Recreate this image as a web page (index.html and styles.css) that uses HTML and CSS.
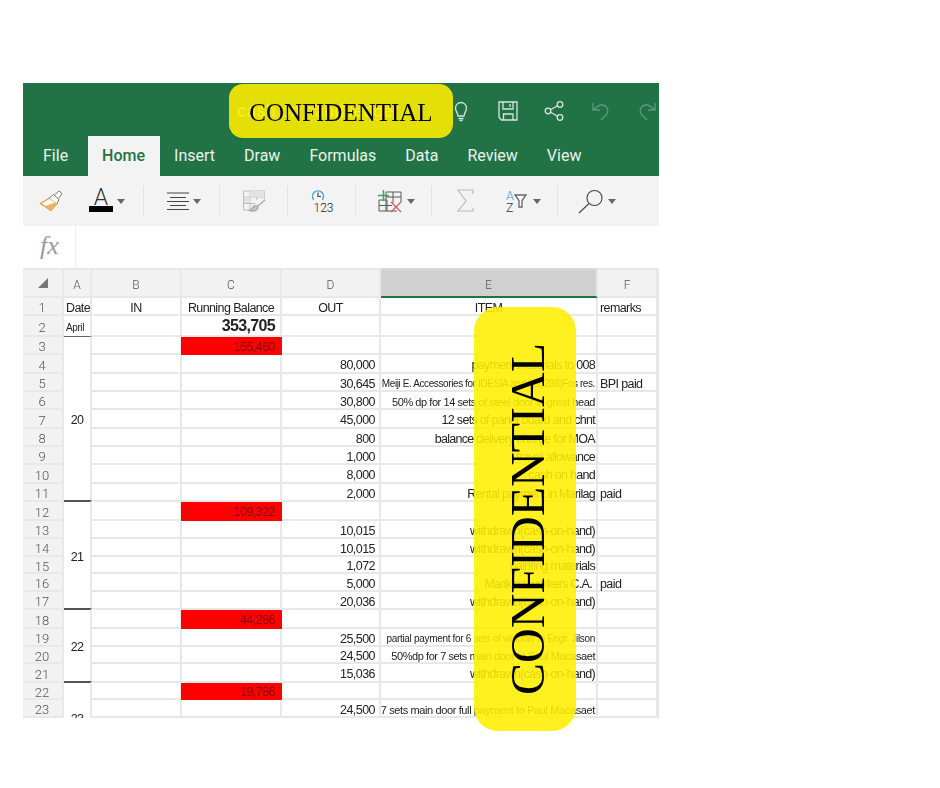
FILE: index.html
```html
<!DOCTYPE html>
<html lang="en">
<head>
<meta charset="utf-8">
<title>Cash on hand</title>
<link rel="stylesheet" href="styles.css">
</head>
<body>
<main class="app">
  <header class="ribbon">
    <div class="topbar">
      <div class="doc-title">cash on hand ledger</div>
      <div class="top-icons">
        <svg class="ti" viewBox="0 0 24 24"><path d="M9 17c0-3-2.500-4.500-2.500-8a5.500 5.500 0 0 1 11 0c0 3.500-2.500 5-2.500 8z"/><path d="M9.500 19.500h5M10.500 21.500h3"/></svg>
        <svg class="ti" viewBox="0 0 24 24"><path d="M3 3h18v18H5.500L3 18.500z"/><path d="M7 3v7h10V3M14 5v3M7.500 21v-6h9.500v6"/></svg>
        <svg class="ti" viewBox="0 0 24 24"><circle cx="6" cy="12" r="2.800"/><circle cx="18" cy="5.500" r="2.800"/><circle cx="18" cy="18.500" r="2.800"/><path d="M8.500 10.700l7-4M8.500 13.300l7 4"/></svg>
        <svg class="ti dim" viewBox="0 0 24 24"><path d="M4 4v7h7"/><path d="M4 11c3-3 5-5 9-5 5 0 7 5 5 9l-6 6"/></svg>
        <svg class="ti dim" viewBox="0 0 24 24"><path d="M20 4v7h-7"/><path d="M20 11c-3-3-5-5-9-5-5 0-7 5-5 9l6 6"/></svg>
      </div>
    </div>
    <nav class="tabs">
      <span class="tab">File</span>
      <span class="tab active">Home</span>
      <span class="tab">Insert</span>
      <span class="tab">Draw</span>
      <span class="tab">Formulas</span>
      <span class="tab">Data</span>
      <span class="tab">Review</span>
      <span class="tab">View</span>
    </nav>
  </header>

  <div class="toolbar">
    <div class="group g1">
      <svg class="ic brush" viewBox="0 0 24 24">
        <path class="o" d="M1.500 14.500L10.500 9l7.500 5.500-6 7z"/>
        <path class="of" d="M6 17l9-3 3 .5-6 7z"/>
        <path class="g" d="M10.500 9l4-3.500 5.500 5-2 4M15.500 6l4.500-4 3 2.500-3.500 5"/>
      </svg>
      <svg class="ic font-a" viewBox="0 0 24 24"><text class="a-letter" x="12" y="16" text-anchor="middle">A</text><rect class="black" x="0" y="17" width="24" height="6"/></svg>
      <i class="caret"></i>
    </div>
    <div class="group g2">
      <svg class="ic align" viewBox="0 0 24 24"><path d="M1 4h22M4 8.500h16M1 12.500h22M4 16.500h16M1 20.500h22"/></svg>
      <i class="caret"></i>
    </div>
    <div class="group g3">
      <svg class="ic fmt" viewBox="0 0 24 24"><path d="M1.500 2h21v8M1.500 2v19h9M1.500 8h21M8 2v19M1.500 14.500h12M15 2v9"/><path class="fill" d="M8 2h14.500v6H8zM2 8h6v6H2z"/><path class="brsh" d="M23 11l-8.500 7M12 17c2-.5 4 .5 4 2-1 3-5 3.500-8 2.500 2-.5 2.500-3 4-4.500z"/></svg>
    </div>
    <div class="group g4">
      <svg class="ic clock" viewBox="0 0 24 24"><path class="cl-b" d="M3.700 10.800A5.500 5.500 0 1 1 12.300 10.800"/><path class="cl-h" d="M8 3.500v4h3"/><text class="cl-t" x="3.500" y="23">123</text></svg>
    </div>
    <div class="group g5">
      <svg class="ic tbl" viewBox="0 0 24 24"><path class="dk" d="M8 3h15v10M1 11h8v11h10M8 8h15M15 3v11M8 3v19M1 16.500h13M1 11v11h8"/><path class="gr" d="M5.500 1v11M0 6.500h11"/><path class="rd" d="M13 13l10 10M23 13L13 23"/></svg>
      <i class="caret"></i>
    </div>
    <div class="group g6">
      <svg class="ic sigma" viewBox="0 0 24 24"><path d="M20 5V1H5l8 11-8 10h15v-3"/></svg>
      <svg class="ic sort" viewBox="0 0 24 24"><text class="az-a" x="3" y="11">A</text><text class="az-z" x="3" y="23">Z</text><path class="fn" d="M12 6h11l-4 5.500V18h-3v-6.500z"/></svg>
      <i class="caret"></i>
    </div>
    <div class="group g7">
      <svg class="ic search" viewBox="0 0 24 24"><circle cx="15.500" cy="9" r="7.500"/><path d="M10 14.500L0 24"/></svg>
      <i class="caret"></i>
    </div>
  </div>

  <div class="formula">
    <div class="fx">fx</div>
    <div class="fx-input"></div>
  </div>

  <div class="sheet">
    <div class="head corner"><i class="tri"></i></div><div class="head">A</div><div class="head">B</div><div class="head">C</div><div class="head">D</div><div class="head sel">E</div><div class="head">F</div><div class="head"></div>

    <div class="rn">1</div><div class="c left">Date</div><div class="c mid">IN</div><div class="c mid">Running Balance</div><div class="c mid">OUT</div><div class="c mid">ITEM</div><div class="c left">remarks</div><div class="c"></div>
    <div class="rn">2</div><div class="c left april">April</div><div class="c"></div><div class="c num big">353,705</div><div class="c"></div><div class="c"></div><div class="c"></div><div class="c"></div>
    <div class="rn">3</div><div class="c mid s9">20</div><div class="c"></div><div class="c num red">155,460</div><div class="c"></div><div class="c"></div><div class="c"></div><div class="c"></div>
    <div class="rn">4</div><div class="c"></div><div class="c"></div><div class="c num">80,000</div><div class="c item">payment materials to 008</div><div class="c"></div><div class="c"></div>
    <div class="rn">5</div><div class="c"></div><div class="c"></div><div class="c num">30,645</div><div class="c item tiny">Meiji E. Accessories for IDESIA and (12,288)Fos res.</div><div class="c left">BPI paid</div><div class="c"></div>
    <div class="rn">6</div><div class="c"></div><div class="c"></div><div class="c num">30,800</div><div class="c item small">50% dp for 14 sets of steel door to great head</div><div class="c"></div><div class="c"></div>
    <div class="rn">7</div><div class="c"></div><div class="c"></div><div class="c num">45,000</div><div class="c item">12 sets of panel board and chnt</div><div class="c"></div><div class="c"></div>
    <div class="rn">8</div><div class="c"></div><div class="c"></div><div class="c num">800</div><div class="c item">balance delivery charge for MOA</div><div class="c"></div><div class="c"></div>
    <div class="rn">9</div><div class="c"></div><div class="c"></div><div class="c num">1,000</div><div class="c item">travel allowance</div><div class="c"></div><div class="c"></div>
    <div class="rn">10</div><div class="c"></div><div class="c"></div><div class="c num">8,000</div><div class="c item">cash on hand</div><div class="c"></div><div class="c"></div>
    <div class="rn">11</div><div class="c"></div><div class="c"></div><div class="c num">2,000</div><div class="c item">Rental payment in Marilag</div><div class="c left">paid</div><div class="c"></div>
    <div class="rn">12</div><div class="c mid s6 rule">21</div><div class="c"></div><div class="c num red">109,322</div><div class="c"></div><div class="c"></div><div class="c"></div><div class="c"></div>
    <div class="rn">13</div><div class="c"></div><div class="c"></div><div class="c num">10,015</div><div class="c item">withdrawn(cash-on-hand)</div><div class="c"></div><div class="c"></div>
    <div class="rn">14</div><div class="c"></div><div class="c"></div><div class="c num">10,015</div><div class="c item">withdrawn(cash-on-hand)</div><div class="c"></div><div class="c"></div>
    <div class="rn">15</div><div class="c"></div><div class="c"></div><div class="c num">1,072</div><div class="c item">painting materials</div><div class="c"></div><div class="c"></div>
    <div class="rn">16</div><div class="c"></div><div class="c"></div><div class="c num">5,000</div><div class="c item trail">Marikina workers C.A.</div><div class="c left">paid</div><div class="c"></div>
    <div class="rn">17</div><div class="c"></div><div class="c"></div><div class="c num">20,036</div><div class="c item">withdrawn(cash-on-hand)</div><div class="c"></div><div class="c"></div>
    <div class="rn">18</div><div class="c mid s4 rule">22</div><div class="c"></div><div class="c num red">44,286</div><div class="c"></div><div class="c"></div><div class="c"></div><div class="c"></div>
    <div class="rn">19</div><div class="c"></div><div class="c"></div><div class="c num">25,500</div><div class="c item tiny loose">partial payment for 6 sets of window  to Engr. Jilson</div><div class="c"></div><div class="c"></div>
    <div class="rn">20</div><div class="c"></div><div class="c"></div><div class="c num">24,500</div><div class="c item small">50%dp for 7 sets main door to Paul Macasaet</div><div class="c"></div><div class="c"></div>
    <div class="rn">21</div><div class="c"></div><div class="c"></div><div class="c num">15,036</div><div class="c item">withdrawn(cash-on-hand)</div><div class="c"></div><div class="c"></div>
    <div class="rn">22</div><div class="c mid s4 rule">23</div><div class="c"></div><div class="c num red">19,786</div><div class="c"></div><div class="c"></div><div class="c"></div><div class="c"></div>
    <div class="rn">23</div><div class="c"></div><div class="c"></div><div class="c num">24,500</div><div class="c item small wide">7 sets main door full payment to Paul Macasaet</div><div class="c"></div><div class="c"></div>
  </div>
</main>

<div class="stamp stamp-top">CONFIDENTIAL</div>
<div class="stamp stamp-side"><span class="stamp-side-text">CONFIDENTIAL</span></div>
</body>
</html>
```
FILE: styles.css
```css
* { box-sizing: border-box; }
html, body { margin: 0; padding: 0; background: #fff; }
body { position: relative; height: 788px; overflow: hidden; font-family: "Liberation Sans", Arial, sans-serif; }

.app { width: 636px; margin: 83px 0 0 23px; display: flex; flex-direction: column; height: 635px; filter: blur(0.35px); }

/* Ribbon */
.ribbon { background: #217346; height: 93px; display: flex; flex-direction: column; }
.topbar { height: 53px; display: flex; align-items: center; padding-top: 1px; }
.doc-title { flex: 1; padding-left: 214px; color: #fff; font: 18px Roboto, sans-serif; }
.top-icons { display: flex; gap: 22.5px; padding-top: 1px; }
.ti { width: 24px; height: 24px; fill: none; stroke: #d5e6dc; stroke-width: 1.300; }
.ti.dim { stroke: #5f9a7b; }

.tabs { height: 40px; display: flex; padding-left: 5.500px; }
.tab { padding: 0 14.500px; color: #e9f2ed; font: 16px/40px Roboto, sans-serif; }
.tab.active { margin-left: 5px; background: #f3f3f3; color: #217346; font-weight: 500; }

/* Toolbar */
.toolbar { height: 50px; background: #f3f3f3; display: flex; padding: 10px 0; }
.group { height: 30px; display: flex; align-items: center; border-right: 1px solid #e2e2e2; flex: none; }
.g1 { width: 121px; padding-left: 16px; }
.g2 { width: 76px; padding-left: 22px; }
.g3 { width: 68px; padding-left: 22px; }
.g4 { width: 68px; padding-left: 22px; }
.g5 { width: 76px; padding-left: 22px; }
.g6 { width: 126px; padding-left: 21px; }
.g7 { width: 101px; padding-left: 21px; border-right: 0; }

.ic { width: 24px; height: 24px; flex: none; fill: none; stroke: #555; stroke-width: 1; overflow: visible; }
.caret { width: 0; height: 0; flex: none; margin-left: 5px; border-left: 4.500px solid transparent; border-right: 4.500px solid transparent; border-top: 5px solid #666; }

.brush .o { stroke: #e39a35; fill: #fff; stroke-width: 1.300; }
.brush .of { stroke: none; fill: #efb060; }
.brush .g { stroke: #777; fill: #fff; }
.font-a { margin-left: 26px; stroke: none; }
.a-letter { font: 300 23px Roboto, sans-serif; fill: #333; }
.black { fill: #000; }
.g1 .caret { margin-left: 4px; }
.g2 .caret { margin-left: 3px; }
.align path { stroke: #444; stroke-width: 1.200; }
.fmt path { stroke: #bdbdbd; }
.fmt .fill { fill: #e2e2e2; stroke: none; }
.fmt .brsh { stroke: #aaa; fill: #c9c9c9; stroke-width: 1.500; }
.clock .cl-b { stroke: #4a9cc9; stroke-width: 1.400; }
.clock .cl-h { stroke: #444; stroke-width: 1.200; }
.cl-t { font: 300 12px Roboto, sans-serif; fill: #222; stroke: none; }
.tbl .dk { stroke: #5a5a5a; }
.tbl .gr { stroke: #3aa65d; stroke-width: 1.500; }
.tbl .rd { stroke: #d3555b; stroke-width: 1.200; }
.sigma path { stroke: #bcbcbc; stroke-width: 1.200; }
.sort { margin-left: 25px; width: 26px; }
.az-a { font: 300 12.500px Roboto, sans-serif; fill: #3d9ad1; stroke: none; }
.az-z { font: 300 12.500px Roboto, sans-serif; fill: #333; stroke: none; }
.fn { stroke: #666; fill: #fff; stroke-width: 1.300; }
.search { stroke: #444; }
.search circle, .search path { stroke-width: 1.100; }

/* Formula bar */
.formula { height: 42px; background: #fff; display: flex; }
.fx { width: 53px; border-right: 1px solid #efefef; padding-left: 17px; font: italic 26px/39px "Liberation Serif", serif; color: #9a9a9a; }
.fx-input { flex: 1; }

/* Sheet */
.sheet {
  flex: 1;
  overflow: hidden;
  display: grid;
  grid-template-columns: 41px 28px 90px 100px 99px 217px 60px 1px;
  grid-template-rows: 30px 18px 21px 18px 19px 18px 18px 19px 18px 18px 19px 18px 19px 18px 18px 17px 18px 18px 19px 18px 17px 19px 17px 18px;
  grid-auto-rows: 18px;
  font-size: 12.500px;
  color: #222;
  letter-spacing: -0.6px;
}
.head, .rn { display: flex; align-items: center; justify-content: center; font-family: Roboto, sans-serif; font-weight: 300; color: #555; letter-spacing: 0; font-size: 12px; background: #f2f2f2; border-right: 2px solid #e8e8e8; border-bottom: 2px solid #e8e8e8; }
.head { border-top: 2px solid #e8e8e8; padding-top: 3px; }
.sel { background: #d0d0d0; border-top-color: #d8d8d8; border-bottom-color: #217346; }
.tri { width: 0; height: 0; margin-top: -3px; border-left: 10px solid transparent; border-bottom: 10px solid #777; }
.rn { font-size: 13px; padding: 3px 1px 0 0; }

.c { display: flex; align-items: center; white-space: nowrap; border-right: 2px solid #e8e8e8; border-bottom: 2px solid #e8e8e8; min-width: 0; padding-top: 3px; }
.left { padding-left: 2px; justify-content: flex-start; }
.mid { justify-content: center; }
.num { justify-content: flex-end; padding-right: 4px; letter-spacing: -0.55px; }
.item { justify-content: flex-end; padding-right: 1px; letter-spacing: -0.7px; }
.trail { padding-right: 4px; }
.tiny { font-size: 10px; letter-spacing: -0.4px; }
.loose { letter-spacing: -0.32px; }
.small { font-size: 11px; letter-spacing: -0.44px; }
.wide { letter-spacing: -0.38px; }
.big { font-size: 16px; font-weight: 700; letter-spacing: -0.65px; padding-right: 5px; padding-top: 1px; }
.red { background: #fe0000; color: #7d0b0b; border-color: #fe0000; box-shadow: -1px 0 0 #fe0000; padding-right: 5px; }
.april { border-bottom-color: #666; border-bottom-width: 1px; font-size: 10px; letter-spacing: -0.4px; }
.s9 { grid-row: span 9; }
.s6 { grid-row: span 6; }
.s4 { grid-row: span 4; }
.rule { border-top: 2px solid #555; margin-top: -2px; }

/* Stamps laid over the screenshot */
.stamp { position: absolute; display: flex; align-items: center; justify-content: center; color: #000; font-family: "Liberation Serif", "Times New Roman", serif; }
.stamp-top { left: 229px; top: 84px; width: 224px; height: 54px; padding-top: 3px; border-radius: 14px; background: rgba(250, 236, 0, 0.9); font-size: 25px; }
.stamp-side { left: 474px; top: 307px; width: 102px; height: 424px; border-radius: 24px; background: rgba(255, 238, 0, 0.88); font-size: 48px; }
.stamp-side-text { writing-mode: vertical-rl; transform: rotate(180deg); padding-right: 4px; }
```
